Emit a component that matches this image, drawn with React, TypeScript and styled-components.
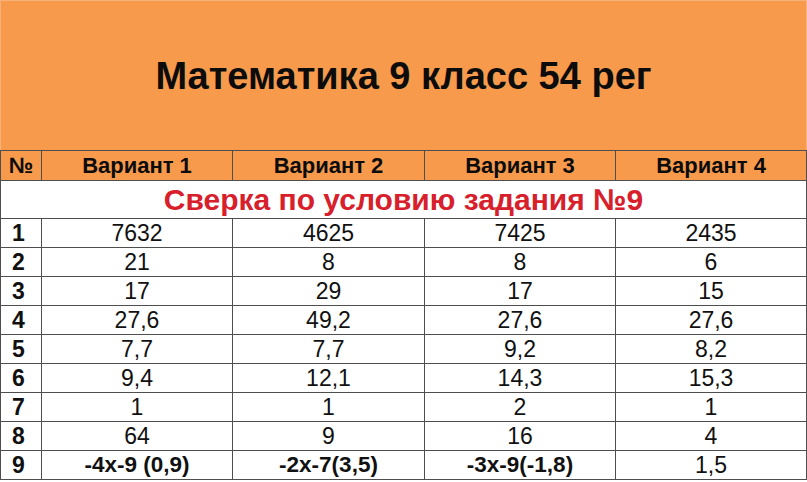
import React from "react";
import styled, { createGlobalStyle } from "styled-components";

const GlobalStyle = createGlobalStyle`
    html, body {
        margin: 0;
        padding: 0;
        background: #ffffff;
    }
    body {
        font-family: "Liberation Sans", Arial, sans-serif;
        width: 807px;
        height: 482px;
        overflow: hidden;
    }
`;

const rows: { n: number; values: string[]; bold?: boolean }[] = [
    { n: 1, values: ["7632", "4625", "7425", "2435"] },
    { n: 2, values: ["21", "8", "8", "6"] },
    { n: 3, values: ["17", "29", "17", "15"] },
    { n: 4, values: ["27,6", "49,2", "27,6", "27,6"] },
    { n: 5, values: ["7,7", "7,7", "9,2", "8,2"] },
    { n: 6, values: ["9,4", "12,1", "14,3", "15,3"] },
    { n: 7, values: ["1", "1", "2", "1"] },
    { n: 8, values: ["64", "9", "16", "4"] },
    { n: 9, values: ["-4x-9 (0,9)", "-2x-7(3,5)", "-3x-9(-1,8)", "1,5"], bold: true },
];

const App = () => {
    return (
        <>
            <GlobalStyle />
            <Table>
                <colgroup>
                    <col style={{ width: 41 }} />
                    <col style={{ width: 191 }} />
                    <col style={{ width: 192 }} />
                    <col style={{ width: 191 }} />
                    <col style={{ width: 191 }} />
                </colgroup>
                <tbody>
                    <tr>
                        <Title colSpan={5}>Математика 9 класс 54 рег</Title>
                    </tr>
                    <tr>
                        <Head>№</Head>
                        <Head>Вариант 1</Head>
                        <Head>Вариант 2</Head>
                        <Head>Вариант 3</Head>
                        <Head>Вариант 4</Head>
                    </tr>
                    <tr>
                        <Sub colSpan={5}>Сверка по условию задания №9</Sub>
                    </tr>
                    {rows.map((row) => (
                        <tr key={row.n}>
                            <Num>{row.n}</Num>
                            {row.values.map((v, i) => (
                                <Cell key={i} $bold={row.bold && i < 3}>
                                    {v}
                                </Cell>
                            ))}
                        </tr>
                    ))}
                </tbody>
            </Table>
        </>
    );
};

export default App;

const Table = styled.table`
    width: 807px;
    border-collapse: collapse;
    table-layout: fixed;
    font-family: "Liberation Sans", Arial, sans-serif;
    color: #111;

    td {
        border: 1px solid #4e4e4e;
        padding: 0;
        text-align: center;
        vertical-align: middle;
        line-height: 1;
        font-family: "Liberation Sans", Arial, sans-serif;
    }
`;

const Title = styled.td`
    && {
        border-top-color: #f6b27a;
        border-left-color: #f6b27a;
        border-right-color: #f6b27a;
    }
    height: 149px;
    background: #f79a4c;
    font-size: 38px;
    font-weight: bold;
    color: #0c0c0c;
`;

const Head = styled.td`
    height: 29px;
    background: #f79a4c;
    font-size: 22px;
    font-weight: bold;
    color: #0c0c0c;
`;

const Sub = styled.td`
    height: 37px;
    background: #ffffff;
    font-size: 30px;
    font-weight: bold;
    color: #d7202b;
`;

const Num = styled.td`
    height: 28px;
    font-size: 23px;
    font-weight: bold;
    text-align: left !important;
    padding-left: 11px !important;
`;

const Cell = styled.td<{ $bold?: boolean }>`
    height: 28px;
    font-size: ${(p) => (p.$bold ? "22.5px" : "23px")};
    font-weight: ${(p) => (p.$bold ? "bold" : "normal")};
`;
